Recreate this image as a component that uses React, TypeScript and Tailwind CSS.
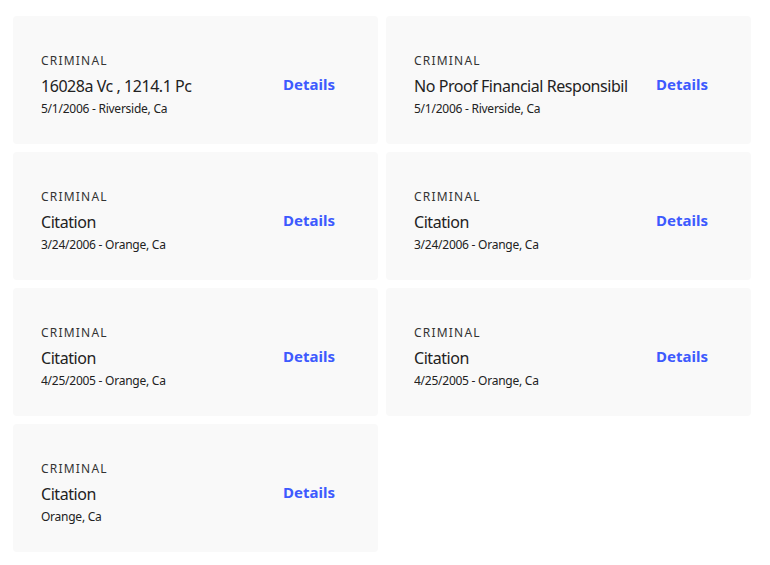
import React from "react"

type Record = { title: string; sub: string }

const records: Record[] = [
  { title: "16028a Vc , 1214.1 Pc", sub: "5/1/2006 - Riverside, Ca" },
  { title: "No Proof Financial Responsibil", sub: "5/1/2006 - Riverside, Ca" },
  { title: "Citation", sub: "3/24/2006 - Orange, Ca" },
  { title: "Citation", sub: "3/24/2006 - Orange, Ca" },
  { title: "Citation", sub: "4/25/2005 - Orange, Ca" },
  { title: "Citation", sub: "4/25/2005 - Orange, Ca" },
  { title: "Citation", sub: "Orange, Ca" },
]

function RecordCard({ r }: { r: Record }) {
  return (
    <div className="flex items-center rounded-[4px] bg-[#f9f9f9] pl-7 pt-9 pb-[27px] h-[128px]">
      <div className="w-[242px] shrink-0 overflow-hidden whitespace-nowrap">
        <div className="text-[12px] leading-[16px] tracking-[1.2px] text-[#333]">CRIMINAL</div>
        <div className="mt-[6px] text-[16px] leading-[22px] tracking-[-0.45px] text-[#222]">{r.title}</div>
        <div className="mt-[4px] text-[12px] leading-[16px] tracking-[-0.25px] text-[#222]">{r.sub}</div>
      </div>
      <button className="-mt-[2px] text-[15px] font-bold leading-[20px] text-[#3d5afe]">Details</button>
    </div>
  )
}

export default function App() {
  return (
    <div className="min-h-screen bg-white pt-4 pl-[13px] font-['Noto_Sans',sans-serif]">
      <div className="grid w-[738px] grid-cols-2 gap-x-[8px] gap-y-[8px]">
        {records.map((r, i) => (
          <RecordCard key={i} r={r} />
        ))}
      </div>
    </div>
  )
}
